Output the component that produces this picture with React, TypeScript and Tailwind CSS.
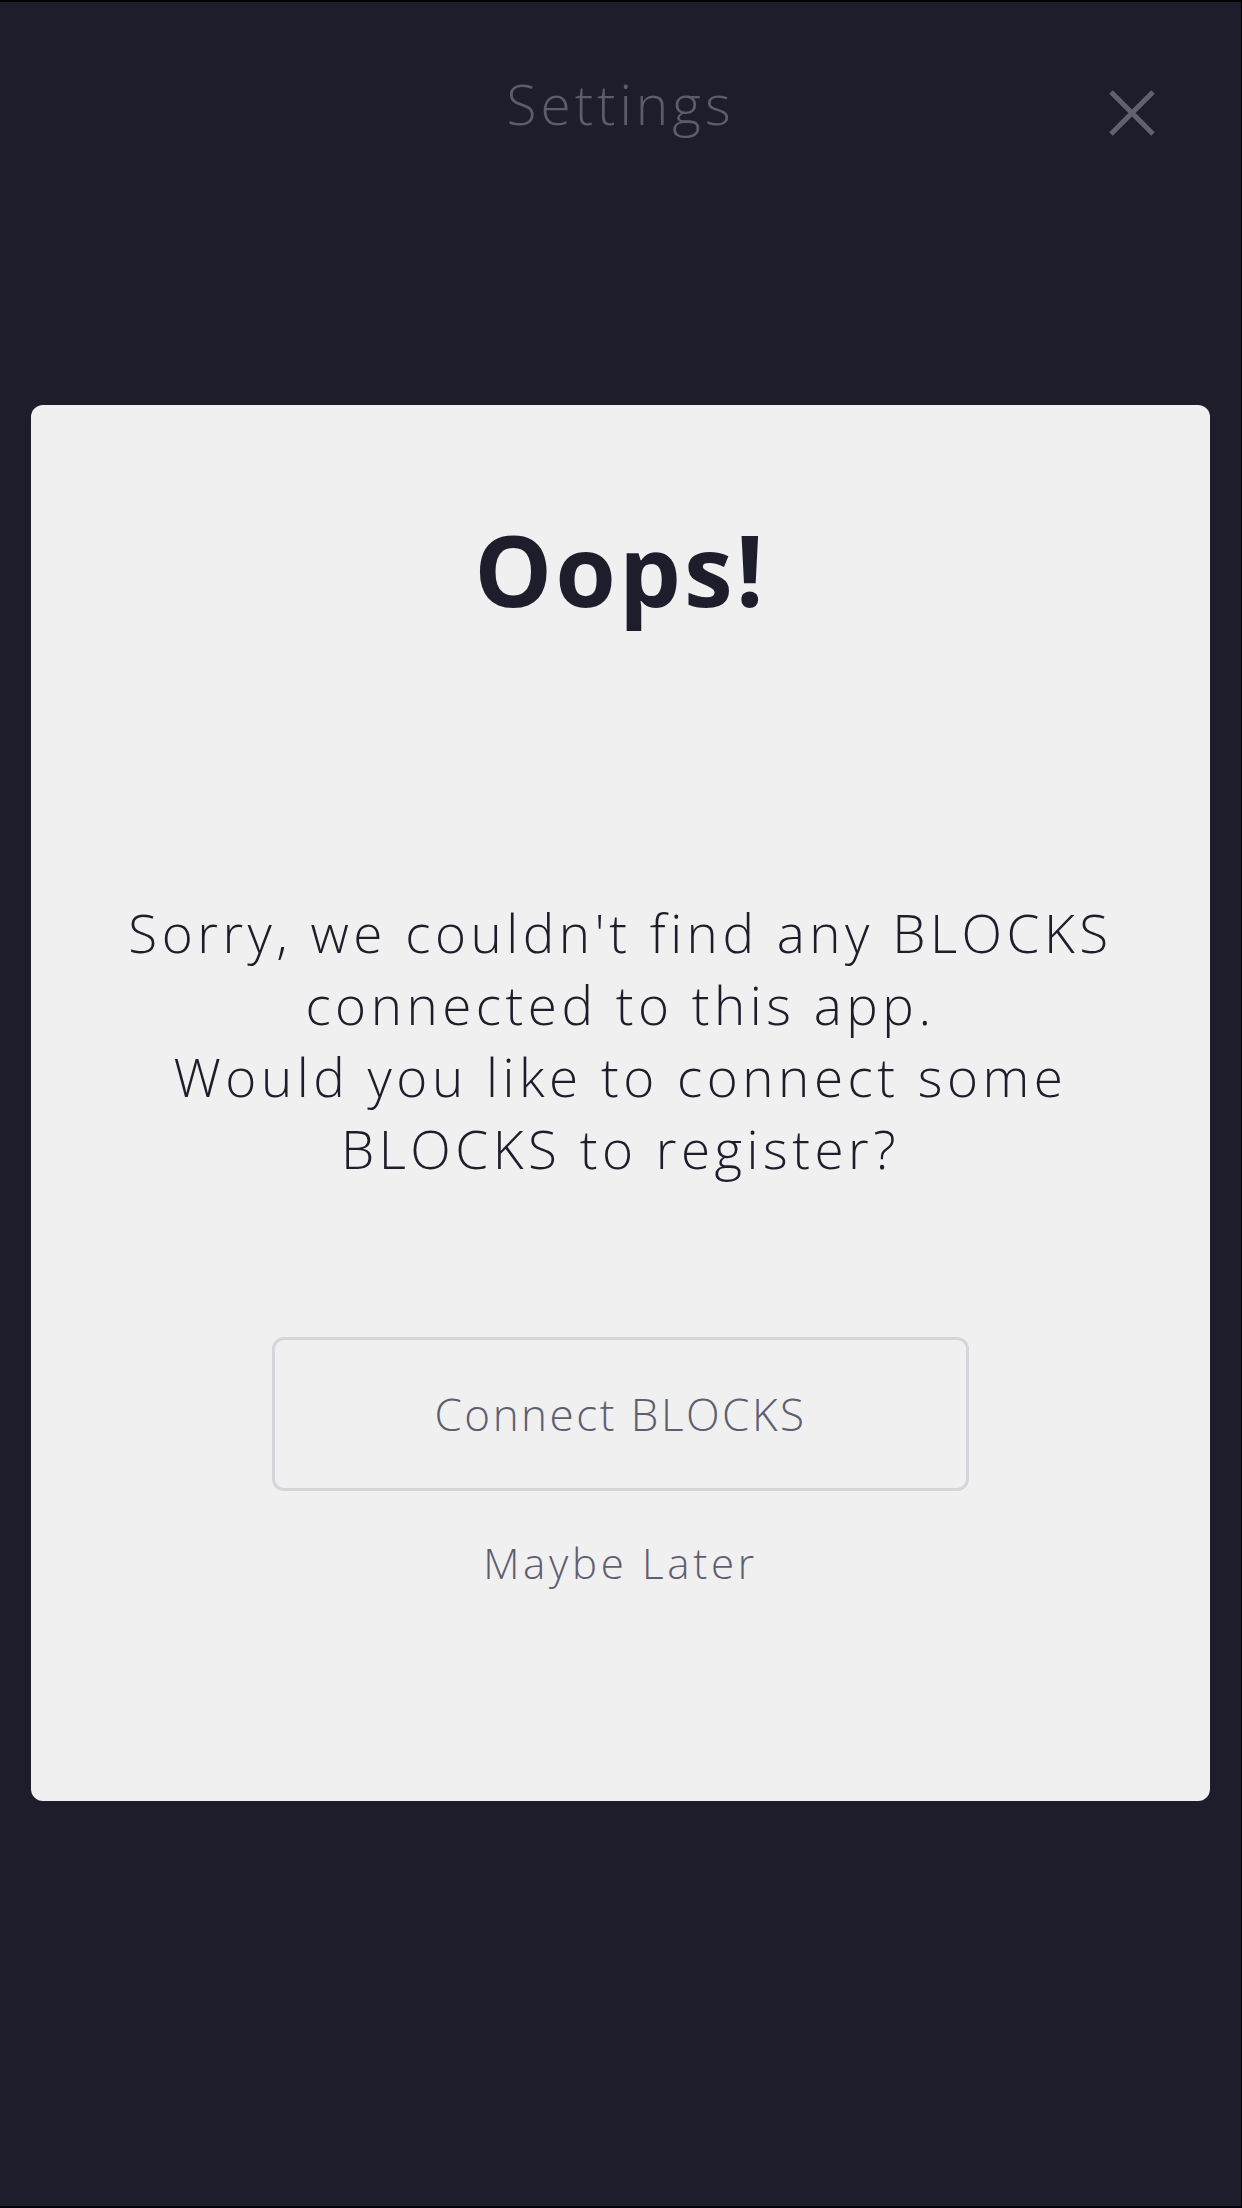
export default function App() {
  return (
    <div
      className="w-[1242px] h-[2208px] bg-[#1e1d2c] border-y-2 border-r border-black flex flex-col overflow-hidden"
      style={{ fontFamily: "'Open Sans', Lato, sans-serif" }}
    >
      {/* header */}
      <div className="grid grid-cols-[1fr_auto_1fr] pt-[69px]">
        <div />
        <h1 className="text-[55px] leading-[66px] font-light tracking-[4px] text-[#5c5c6c]">Settings</h1>
        <div className="flex justify-end pr-[86px] pt-[19px]">
          <svg width="46" height="46" viewBox="0 0 46 46" className="text-[#62626f]">
            <path d="M2 2 L44 44 M44 2 L2 44" stroke="currentColor" strokeWidth="5" strokeLinecap="butt" />
          </svg>
        </div>
      </div>

      {/* dialog */}
      <div className="mx-[31px] mt-[268px] h-[1396px] rounded-[12px] bg-[#f0f0f0] flex flex-col items-center pt-[105px]">
        <h2 className="text-[98px] leading-[118px] font-bold text-[#1e1d2c] tracking-[3px]">Oops!</h2>

        <p className="mt-[269px] text-center text-[53px] leading-[72px] font-light tracking-[4.5px] text-[#1e1d2c]">
          Sorry, we couldn't find any BLOCKS
          <br />
          connected to this app.
          <br />
          Would you like to connect some
          <br />
          BLOCKS to register?
        </p>

        <button className="mt-[152px] w-[697px] h-[154px] rounded-[12px] border-[3px] border-[#d6d6da] flex items-center justify-center text-[44px] font-light tracking-[2.5px] text-[#5e5e70]">
          Connect BLOCKS
        </button>

        <button className="mt-[47px] text-[42px] leading-[50px] font-light tracking-[3.7px] text-[#5e5e70]">
          Maybe Later
        </button>
      </div>
    </div>
  );
}
